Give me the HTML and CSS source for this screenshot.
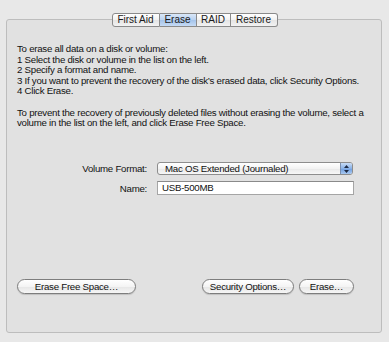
FILE: index.html
```html
<!DOCTYPE html>
<html lang="en">
<head>
    <meta charset="UTF-8">
    <title>Disk Utility - Erase</title>
    <link rel="stylesheet" href="styles.css">
</head>
<body>
    <div class="window">
        <!-- Tab strip sits over the top edge of the panel -->
        <div class="tabs">
            <span class="tab tab-first">First Aid</span>
            <span class="tab tab-active">Erase</span>
            <span class="tab">RAID</span>
            <span class="tab tab-last">Restore</span>
        </div>

        <div class="panel">
            <div class="help">
                <p>To erase all data on a disk or volume:<br>
                1 Select the disk or volume in the list on the left.<br>
                2 Specify a format and name.<br>
                3 If you want to prevent the recovery of the disk&rsquo;s erased data, click Security Options.<br>
                4 Click Erase.</p>
                <p>To prevent the recovery of previously deleted files without erasing the volume, select a volume in the list on the left, and click Erase Free Space.</p>
            </div>

            <div class="form">
                <div class="row">
                    <label class="label">Volume Format:</label>
                    <div class="popup">
                        <span class="popup-text">Mac OS Extended (Journaled)</span>
                        <span class="popup-arrows">
                            <svg width="5" height="8" viewBox="0 0 5 8"><path d="M2.5 0 L5 3 L0 3 Z M0 5 L5 5 L2.5 8 Z" fill="#1d2a44"/></svg>
                        </span>
                    </div>
                </div>
                <div class="row">
                    <label class="label">Name:</label>
                    <div class="field">USB-500MB</div>
                </div>
            </div>

            <div class="buttons">
                <span class="btn btn-free">Erase Free Space…</span>
                <span class="spacer"></span>
                <span class="btn btn-security">Security Options…</span>
                <span class="btn btn-erase">Erase…</span>
            </div>
        </div>
    </div>
</body>
</html>
```

FILE: styles.css
```css
/* General Page Styles */
body {
    margin: 0;
    background-color: #e8e8e8;
    font-family: 'Liberation Sans', Arial, sans-serif;
    font-size: 9.7px;
    letter-spacing: -0.26px;
    color: #111;
}

.window {
    width: 389px;
    height: 342px;
    padding-top: 13px;
    box-sizing: border-box;
}

/* Tabs */
.tabs {
    display: flex;
    justify-content: center;
    height: 14px;
    position: relative;
    z-index: 1;
}

.tab {
    box-sizing: border-box;
    height: 14px;
    line-height: 12px;
    text-align: center;
    font-size: 10px;
    letter-spacing: 0;
    border: 1px solid #8a8a8a;
    border-left: none;
    background: linear-gradient(#ffffff, #f1f1f1 50%, #e4e4e4 51%, #f2f2f2);
    color: #1a1a1a;
}

.tab:nth-child(1) { width: 48px; }
.tab:nth-child(2) { width: 37px; }
.tab:nth-child(3) { width: 34px; }
.tab:nth-child(4) { width: 47px; }

.tab-first {
    border-left: 1px solid #8a8a8a;
    border-radius: 3px 0 0 3px;
}

.tab-last {
    border-radius: 0 3px 3px 0;
}

.tab-active {
    background: linear-gradient(#d9e7f8, #b8d1f0 50%, #a4c3ea 51%, #c6dbf5);
}

/* Panel */
.panel {
    margin: -8px 0 0 6px;
    width: 376px;
    height: 314px;
    box-sizing: border-box;
    border: 1px solid #bdbdbd;
    border-radius: 3px;
    background-color: #e1e1e1;
    padding: 24px 14px 38px 10px;
    display: flex;
    flex-direction: column;
}

.help p {
    margin: 0 0 10.6px 0;
    line-height: 10.6px;
}

/* Form */
.form {
    margin-top: 23px;
    display: flex;
    flex-direction: column;
    gap: 6px;
}

.row {
    display: flex;
    align-items: center;
}

.label {
    width: 140px;
    text-align: right;
    padding-right: 10px;
    box-sizing: border-box;
}

.popup {
    box-sizing: border-box;
    width: 196px;
    height: 13px;
    display: flex;
    align-items: center;
    border: 1px solid #8d8d8d;
    border-radius: 3px;
    background: linear-gradient(#ffffff, #f3f3f3 50%, #e8e8e8 51%, #f7f7f7);
    overflow: hidden;
}

.popup-text {
    flex: 1;
    padding-left: 7px;
}

.popup-arrows {
    width: 11px;
    height: 100%;
    display: flex;
    align-items: center;
    justify-content: center;
    background: linear-gradient(#c8dcf6, #89b1e6 50%, #6d9de0 51%, #a9c9f1);
    border-left: 1px solid #7b8fae;
}

.field {
    box-sizing: border-box;
    width: 197px;
    height: 14px;
    line-height: 12px;
    border: 1px solid #a5a5a5;
    border-top-color: #8a8a8a;
    background-color: #fff;
    padding-left: 4px;
}

/* Buttons */
.buttons {
    margin-top: auto;
    padding-right: 13px;
    display: flex;
    align-items: center;
}

.spacer {
    flex: 1;
}

.btn {
    box-sizing: border-box;
    height: 15px;
    line-height: 13px;
    text-align: center;
    border: 1px solid #7d7d7d;
    border-radius: 8px;
    background: linear-gradient(#ffffff, #f4f4f4 50%, #e6e6e6 51%, #f6f6f6);
    box-shadow: 0 1px 1px rgba(0, 0, 0, 0.15);
}

.btn-free { width: 119px; }
.btn-security { width: 92px; }
.btn-erase { width: 55px; margin-left: 5px; }
```
